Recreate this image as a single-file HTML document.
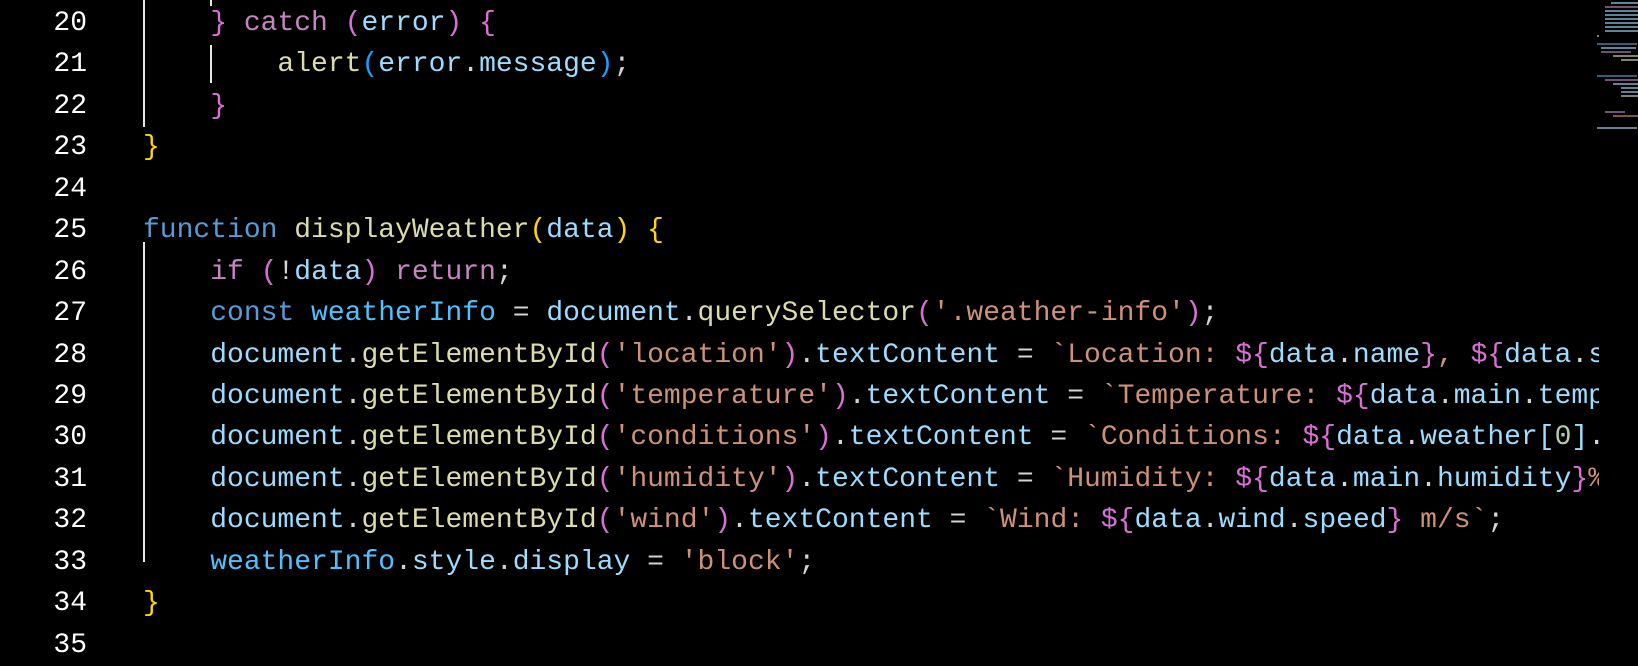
<!DOCTYPE html>
<html><head><meta charset="utf-8"><style>
html,body{margin:0;padding:0;background:#000;width:1638px;height:664px;overflow:hidden}
.ed{position:absolute;left:0;top:3px;font-family:"Liberation Mono",monospace;font-size:28px;line-height:41.45px;color:#d4d4d4}
.ln{position:absolute;left:0;width:87px;text-align:right;color:#fff}
.code{position:absolute;left:143px;width:1456px;overflow:hidden}
.row{height:41.45px;white-space:pre}
.k{color:#c586c0}.b{color:#569cd6}.f{color:#dcdcaa}.v{color:#9cdcfe}.c{color:#4fc1ff}.s{color:#ce9178}.n{color:#b5cea8}
.g{color:#ffd700}.p{color:#da70d6}.u{color:#179fff}
.guide{position:absolute;width:2px;background:#e8e8e8}
.mm{position:absolute;left:1597px;top:0;width:41px;height:140px}
.mm i{position:absolute;height:2px;opacity:.6}
</style></head><body>
<div class="ed">
<div class="ln"><div class="row">20</div><div class="row">21</div><div class="row">22</div><div class="row">23</div><div class="row">24</div><div class="row">25</div><div class="row">26</div><div class="row">27</div><div class="row">28</div><div class="row">29</div><div class="row">30</div><div class="row">31</div><div class="row">32</div><div class="row">33</div><div class="row">34</div><div class="row">35</div></div>
<div class="code"><div class="row">    <span class="p">}</span> <span class="k">catch</span> <span class="p">(</span><span class="v">error</span><span class="p">)</span> <span class="p">{</span></div><div class="row">        <span class="f">alert</span><span class="u">(</span><span class="v">error</span>.<span class="v">message</span><span class="u">)</span>;</div><div class="row">    <span class="p">}</span></div><div class="row"><span class="g">}</span></div><div class="row"> </div><div class="row"><span class="b">function</span> <span class="f">displayWeather</span><span class="g">(</span><span class="v">data</span><span class="g">)</span> <span class="g">{</span></div><div class="row">    <span class="k">if</span> <span class="p">(</span>!<span class="v">data</span><span class="p">)</span> <span class="k">return</span>;</div><div class="row">    <span class="b">const</span> <span class="c">weatherInfo</span> = <span class="v">document</span>.<span class="f">querySelector</span><span class="p">(</span><span class="s">'.weather-info'</span><span class="p">)</span>;</div><div class="row">    <span class="v">document</span>.<span class="f">getElementById</span><span class="p">(</span><span class="s">'location'</span><span class="p">)</span>.<span class="v">textContent</span> = <span class="s">`Location: </span><span class="p">${</span><span class="v">data</span>.<span class="v">name</span><span class="p">}</span><span class="s">, </span><span class="p">${</span><span class="v">data</span>.<span class="v">sys</span>.<span class="v">country</span><span class="p">}</span><span class="s">`</span>;</div><div class="row">    <span class="v">document</span>.<span class="f">getElementById</span><span class="p">(</span><span class="s">'temperature'</span><span class="p">)</span>.<span class="v">textContent</span> = <span class="s">`Temperature: </span><span class="p">${</span><span class="v">data</span>.<span class="v">main</span>.<span class="v">temp</span><span class="p">}</span><span class="s">°C`</span>;</div><div class="row">    <span class="v">document</span>.<span class="f">getElementById</span><span class="p">(</span><span class="s">'conditions'</span><span class="p">)</span>.<span class="v">textContent</span> = <span class="s">`Conditions: </span><span class="p">${</span><span class="v">data</span>.<span class="v">weather</span><span class="v">[</span><span class="n">0</span><span class="v">]</span>.<span class="v">description</span><span class="p">}</span><span class="s">`</span>;</div><div class="row">    <span class="v">document</span>.<span class="f">getElementById</span><span class="p">(</span><span class="s">'humidity'</span><span class="p">)</span>.<span class="v">textContent</span> = <span class="s">`Humidity: </span><span class="p">${</span><span class="v">data</span>.<span class="v">main</span>.<span class="v">humidity</span><span class="p">}</span><span class="s">%`</span>;</div><div class="row">    <span class="v">document</span>.<span class="f">getElementById</span><span class="p">(</span><span class="s">'wind'</span><span class="p">)</span>.<span class="v">textContent</span> = <span class="s">`Wind: </span><span class="p">${</span><span class="v">data</span>.<span class="v">wind</span>.<span class="v">speed</span><span class="p">}</span><span class="s"> m/s`</span>;</div><div class="row">    <span class="c">weatherInfo</span>.<span class="v">style</span>.<span class="v">display</span> = <span class="s">'block'</span>;</div><div class="row"><span class="g">}</span></div><div class="row"> </div></div>
</div>
<div class="guide" style="left:143px;top:0;height:127px"></div>
<div class="guide" style="left:210px;top:0;height:6px"></div>
<div class="guide" style="left:210px;top:45px;height:38px"></div>
<div class="guide" style="left:143px;top:242px;height:320px"></div>
<div class="mm">
<i style="left:14px;top:2px;width:27px;background:#9cdcfe"></i>
<i style="left:8px;top:6px;width:33px;background:#c586c0"></i>
<i style="left:8px;top:10px;width:33px;background:#9cdcfe"></i>
<i style="left:8px;top:14px;width:33px;background:#9cdcfe"></i>
<i style="left:8px;top:18px;width:33px;background:#9cdcfe"></i>
<i style="left:8px;top:22px;width:33px;background:#9cdcfe"></i>
<i style="left:8px;top:26px;width:33px;background:#9cdcfe"></i>
<i style="left:8px;top:30px;width:33px;background:#9cdcfe"></i>
<i style="left:0;top:35px;width:2px;background:#ccc"></i>
<i style="left:0;top:43px;width:40px;background:#569cd6"></i>
<i style="left:4px;top:47px;width:35px;background:#9cdcfe"></i>
<i style="left:4px;top:51px;width:30px;background:#c586c0"></i>
<i style="left:16px;top:55px;width:25px;background:#dcdcaa"></i>
<i style="left:24px;top:59px;width:17px;background:#dcdcaa"></i>
<i style="left:0;top:75px;width:40px;background:#569cd6"></i>
<i style="left:8px;top:79px;width:33px;background:#c586c0"></i>
<i style="left:16px;top:83px;width:25px;background:#9cdcfe"></i>
<i style="left:24px;top:87px;width:17px;background:#9cdcfe"></i>
<i style="left:24px;top:91px;width:17px;background:#9cdcfe"></i>
<i style="left:24px;top:95px;width:17px;background:#dcdcaa"></i>
<i style="left:8px;top:111px;width:20px;background:#c586c0"></i>
<i style="left:16px;top:115px;width:25px;background:#ce9178"></i>
<i style="left:0;top:127px;width:40px;background:#9cdcfe"></i>
</div>
</body></html>
